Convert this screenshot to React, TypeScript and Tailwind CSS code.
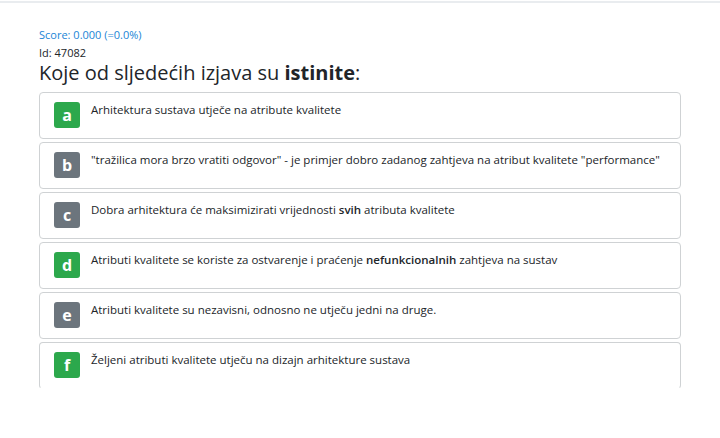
import type { ReactNode } from 'react';

type Option = {
  letter: string;
  correct: boolean;
  text: ReactNode;
};

const options: Option[] = [
  { letter: 'a', correct: true, text: 'Arhitektura sustava utječe na atribute kvalitete' },
  {
    letter: 'b',
    correct: false,
    text: '"tražilica mora brzo vratiti odgovor" - je primjer dobro zadanog zahtjeva na atribut kvalitete "performance"',
  },
  {
    letter: 'c',
    correct: false,
    text: (
      <>
        Dobra arhitektura će maksimizirati vrijednosti <span className="font-semibold">svih</span> atributa kvalitete
      </>
    ),
  },
  {
    letter: 'd',
    correct: true,
    text: (
      <>
        Atributi kvalitete se koriste za ostvarenje i praćenje{' '}
        <span className="font-semibold">nefunkcionalnih</span> zahtjeva na sustav
      </>
    ),
  },
  { letter: 'e', correct: false, text: 'Atributi kvalitete su nezavisni, odnosno ne utječu jedni na druge.' },
  { letter: 'f', correct: true, text: 'Željeni atributi kvalitete utječu na dizajn arhitekture sustava' },
];

export default function App() {
  return (
    <div className="min-h-[438px] w-[720px] bg-white font-['Open_Sans',sans-serif] text-[#212529]">
      <div className="h-[3px] border-b-2 border-[#e9ecef]" />
      <div className="px-[39px] pt-[25px]">
        <div className="text-[11px] leading-[14px] text-[#1a85d6]">Score: 0.000 (=0.0%)</div>
        <div className="mt-[4px] text-[11px] leading-[14px]">Id: 47082</div>
        <h2 className="mt-[1px] mb-[7px] text-[20px] leading-[24px]">
          Koje od sljedećih izjava su <b>istinite</b>:
        </h2>
        <div className="flex w-[642px] flex-col gap-[3px]">
          {options.map((o, i) => (
            <div
              key={o.letter}
              className={`flex h-[47px] items-start gap-[11px] rounded-[4px] border border-[#cfd2d4] px-[14px] pt-[9px] ${
                i === options.length - 1 ? 'border-b-transparent' : ''
              }`}
            >
              <span
                className={`flex h-[26px] w-[26px] shrink-0 items-center justify-center rounded-[3px] text-[16px] font-bold text-white ${
                  o.correct ? 'bg-[#2ca84c]' : 'bg-[#6c757d]'
                }`}
              >
                {o.letter}
              </span>
              <p className="text-[11.5px] leading-[16px]">{o.text}</p>
            </div>
          ))}
        </div>
      </div>
    </div>
  );
}
